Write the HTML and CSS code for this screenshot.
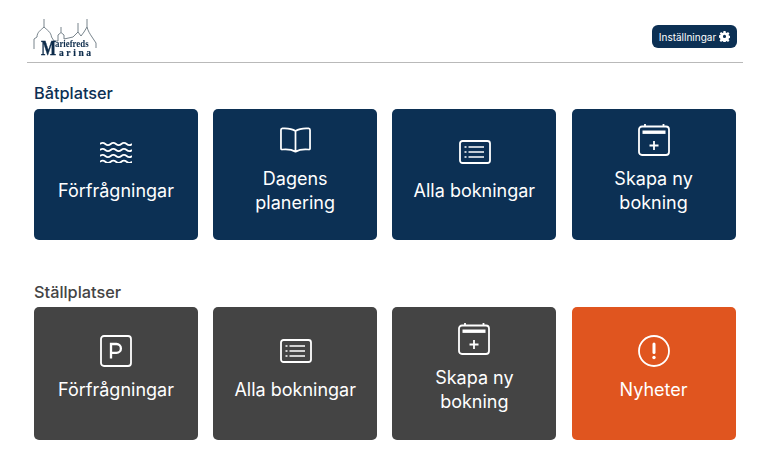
FILE: index.html
```html
<!DOCTYPE html>
<html lang="sv">
<head>
<meta charset="utf-8">
<title>Mariefreds Marina</title>
<link rel="stylesheet" href="styles.css">
</head>
<body>
<svg class="sprite" width="0" height="0" aria-hidden="true">
  <symbol id="i-list" viewBox="0 0 32 24">
    <rect x="1" y="1" width="30" height="22" rx="2.5" fill="none" stroke="currentColor" stroke-width="1.800"/>
    <path d="M9.500 7h15.500M9.500 12h15.500M9.500 17h15.500" fill="none" stroke="currentColor" stroke-width="1.600"/>
    <path d="M5.500 7h2M5.500 12h2M5.500 17h2" fill="none" stroke="currentColor" stroke-width="1.600"/>
  </symbol>
  <symbol id="i-cal" viewBox="0 0 32 32">
    <path d="M7 2.500V0M25.500 2.500V0" fill="none" stroke="currentColor" stroke-width="1.800"/>
    <rect x="1" y="2.500" width="30" height="28.500" rx="3" fill="none" stroke="currentColor" stroke-width="1.800"/>
    <rect x="4.500" y="6.500" width="23" height="3.400" fill="currentColor"/>
    <path d="M16 17v9M11.500 21.500h9" fill="none" stroke="currentColor" stroke-width="1.800"/>
  </symbol>
</svg>
<header class="topbar">
  <div class="logo">
    <svg class="logo-art" viewBox="0 0 66 38" width="66" height="38" aria-hidden="true">
      <path d="M2 31V21L5 19C5 14 9 12 12 9C15 12 19 14 19.500 19L22 23H26V17L29 14.500V9M29 14.500L32 17V21L41 19L46 14V5M46 14L49 18L52 14L55 9V1M55 9C56 13 58 16 60 19L64 25V30M12 9V1" fill="none" stroke="#56646f" stroke-width=".8"/>
    </svg>
    <span class="logo-m">M</span>
    <span class="logo-top">ariefreds</span>
    <span class="logo-bottom">arina</span>
  </div>
  <button class="settings" type="button">
    <span>Inställningar</span>
    <svg viewBox="0 0 16 16" width="11" height="11" aria-hidden="true">
      <path fill="currentColor" fill-rule="evenodd" d="M6.500 0h3l.4 2.200 1.300.6L13.100 1.500l2.100 2.100-1.300 1.900.6 1.300 2.200.4v3l-2.200.4-.6 1.300 1.300 1.900-2.100 2.100-1.900-1.300-1.300.6-.4 2.200h-3l-.4-2.200-1.300-.6-1.900 1.300-2.100-2.100 1.300-1.900-.6-1.300L-.500 9.300v-3l2.200-.4.600-1.300L1 3.600 3.100 1.500 5 2.800l1.300-.6z M8 5.600a2.300 2.300 0 1 0 0 4.600 2.300 2.300 0 0 0 0-4.600z"/>
    </svg>
  </button>
</header>
<main class="content">
  <section class="group">
    <h2 class="group-title navy-text">Båtplatser</h2>
    <div class="cards">
      <a class="card navy">
        <span class="icon-box">
          <svg class="icon icon-waves" viewBox="0 0 32 22" aria-hidden="true">
            <path d="M0 3c1.800-1.600 3.500-1.600 5.330 0s3.500 1.600 5.330 0 3.500-1.600 5.330 0 3.500 1.600 5.330 0 3.500-1.600 5.330 0 3.500 1.600 5.330 0M0 9c1.800-1.600 3.500-1.600 5.330 0s3.500 1.600 5.330 0 3.500-1.600 5.330 0 3.500 1.600 5.330 0 3.500-1.600 5.330 0 3.500 1.600 5.330 0M0 15c1.800-1.600 3.500-1.600 5.330 0s3.500 1.600 5.330 0 3.500-1.600 5.330 0 3.500 1.600 5.330 0 3.500-1.600 5.330 0 3.500 1.600 5.330 0M0 20.800c1.800-1.600 3.500-1.600 5.330 0s3.500 1.600 5.330 0 3.500-1.600 5.330 0 3.500 1.600 5.330 0 3.500-1.600 5.330 0 3.500 1.600 5.330 0" fill="none" stroke="currentColor" stroke-width="1.800"/>
          </svg>
        </span>
        <span class="label">Förfrågningar</span>
      </a>
      <a class="card navy">
        <span class="icon-box">
          <svg class="icon icon-book" viewBox="0 0 32 26" aria-hidden="true">
            <path d="M16 3.800C13 1.800 7 .800 2.500 1.100 1.500 1.200 1 1.800 1 2.800v18.900c0 .8.600 1.200 1.400 1.100C7 22.300 13 23.300 16 25c3-1.700 9-2.700 13.600-2.200.8.100 1.400-.3 1.400-1.100V2.800c0-1-.5-1.600-1.500-1.700C25 .8 19 1.800 16 3.800zM16 3.800V25" fill="none" stroke="currentColor" stroke-width="1.800" stroke-linejoin="round"/>
          </svg>
        </span>
        <span class="label">Dagens<br>planering</span>
      </a>
      <a class="card navy">
        <span class="icon-box"><svg class="icon icon-list"><use href="#i-list"/></svg></span>
        <span class="label">Alla bokningar</span>
      </a>
      <a class="card navy">
        <span class="icon-box"><svg class="icon icon-cal"><use href="#i-cal"/></svg></span>
        <span class="label">Skapa ny<br>bokning</span>
      </a>
    </div>
  </section>
  <section class="group group-second">
    <h2 class="group-title grey-text">Ställplatser</h2>
    <div class="cards">
      <a class="card grey">
        <span class="icon-box">
          <svg class="icon icon-square" viewBox="0 0 32 32" aria-hidden="true">
            <rect x="1" y="1" width="30" height="30" rx="3" fill="none" stroke="currentColor" stroke-width="1.800"/>
            <path d="M11 23.500V9h5.500a4.400 4.400 0 0 1 0 8.800H11" fill="none" stroke="currentColor" stroke-width="2.300"/>
          </svg>
        </span>
        <span class="label">Förfrågningar</span>
      </a>
      <a class="card grey">
        <span class="icon-box"><svg class="icon icon-list"><use href="#i-list"/></svg></span>
        <span class="label">Alla bokningar</span>
      </a>
      <a class="card grey">
        <span class="icon-box"><svg class="icon icon-cal"><use href="#i-cal"/></svg></span>
        <span class="label">Skapa ny<br>bokning</span>
      </a>
      <a class="card orange">
        <span class="icon-box">
          <svg class="icon icon-square" viewBox="0 0 32 32" aria-hidden="true">
            <circle cx="16" cy="16" r="15" fill="none" stroke="currentColor" stroke-width="1.800"/>
            <path d="M16 9v8.500" fill="none" stroke="currentColor" stroke-width="3" stroke-linecap="round"/>
            <circle cx="16" cy="22.500" r="1.700" fill="currentColor"/>
          </svg>
        </span>
        <span class="label">Nyheter</span>
      </a>
    </div>
  </section>
</main>
</body>
</html>
```
FILE: styles.css
```css
* { box-sizing: border-box; }
html, body { margin: 0; height: 100%; }
body {
  background: #fff;
  font-family: Inter, "Liberation Sans", sans-serif;
  color: #0c3054;
  width: 768px;
  height: 476px;
  overflow: hidden;
}
.sprite { position: absolute; }
.topbar {
  margin: 0 25px 0 27px;
  height: 63px;
  border-bottom: 1px solid #b9b9b9;
  display: flex;
  justify-content: space-between;
  align-items: flex-start;
  padding: 18px 6px 0 5px;
}
.logo {
  position: relative;
  width: 66px;
  height: 38px;
  filter: blur(.3px);
}
.logo-art { position: absolute; left: 0; top: 0; }
.logo-m, .logo-top, .logo-bottom {
  position: absolute;
  font-family: "Liberation Serif", serif;
  font-weight: 700;
  color: #0c2b4a;
}
.logo-m {
  left: 9px;
  top: 20px;
  font-size: 21px;
  line-height: 20px;
  -webkit-text-stroke: .4px #0c2b4a;
  transform: scaleX(.76);
  transform-origin: left;
}
.logo-top {
  left: 23px;
  top: 22px;
  font-size: 10px;
  line-height: 8px;
  transform: scaleX(.88);
  transform-origin: left;
}
.logo-bottom {
  left: 27px;
  top: 31px;
  font-size: 9.500px;
  line-height: 8px;
  letter-spacing: 2.600px;
  -webkit-text-stroke: .2px #0c2b4a;
}
.settings {
  margin-top: 7px;
  height: 23px;
  width: 85px;
  border: 0;
  border-radius: 6px;
  background: #0c3054;
  color: #fff;
  font: 400 10px Inter, "Liberation Sans", sans-serif;
  display: flex;
  align-items: center;
  justify-content: center;
  gap: 3px;
  padding: 0;
}
.content { padding: 0 32px 0 34px; }
.group { margin-top: 20px; }
.group-second { margin-top: 42px; }
.group-title {
  margin: 0 0 6px;
  font-size: 16.300px;
  line-height: 20px;
  font-weight: 500;
}
.group-second .group-title { margin-bottom: 5px; }
.navy-text { color: #0c3054; }
.grey-text { color: #444; }
.cards {
  display: grid;
  grid-template-columns: repeat(4, 164px);
  column-gap: 15.200px;
  grid-auto-rows: 131px;
}
.group-second .cards { grid-auto-rows: 133px; }
.card {
  border-radius: 5px;
  color: #fff;
  display: flex;
  flex-direction: column;
  align-items: center;
  justify-content: center;
  gap: 11px;
  padding-bottom: 10px;
  text-align: center;
}
.navy { background: #0c3054; }
.grey { background: #444; }
.orange { background: #e0551f; }
.icon-box {
  height: 32px;
  display: flex;
  align-items: center;
  justify-content: center;
}
.label { font-size: 18px; line-height: 24px; font-weight: 400; }
.icon { display: block; color: #fff; }
.icon-waves { width: 32px; height: 22px; }
.icon-book { width: 31px; height: 26px; margin-left: 1px; }
.icon-list { width: 32px; height: 24px; margin-left: 1px; }
.icon-cal { width: 32px; height: 32px; }
.icon-square { width: 32px; height: 32px; }
```
